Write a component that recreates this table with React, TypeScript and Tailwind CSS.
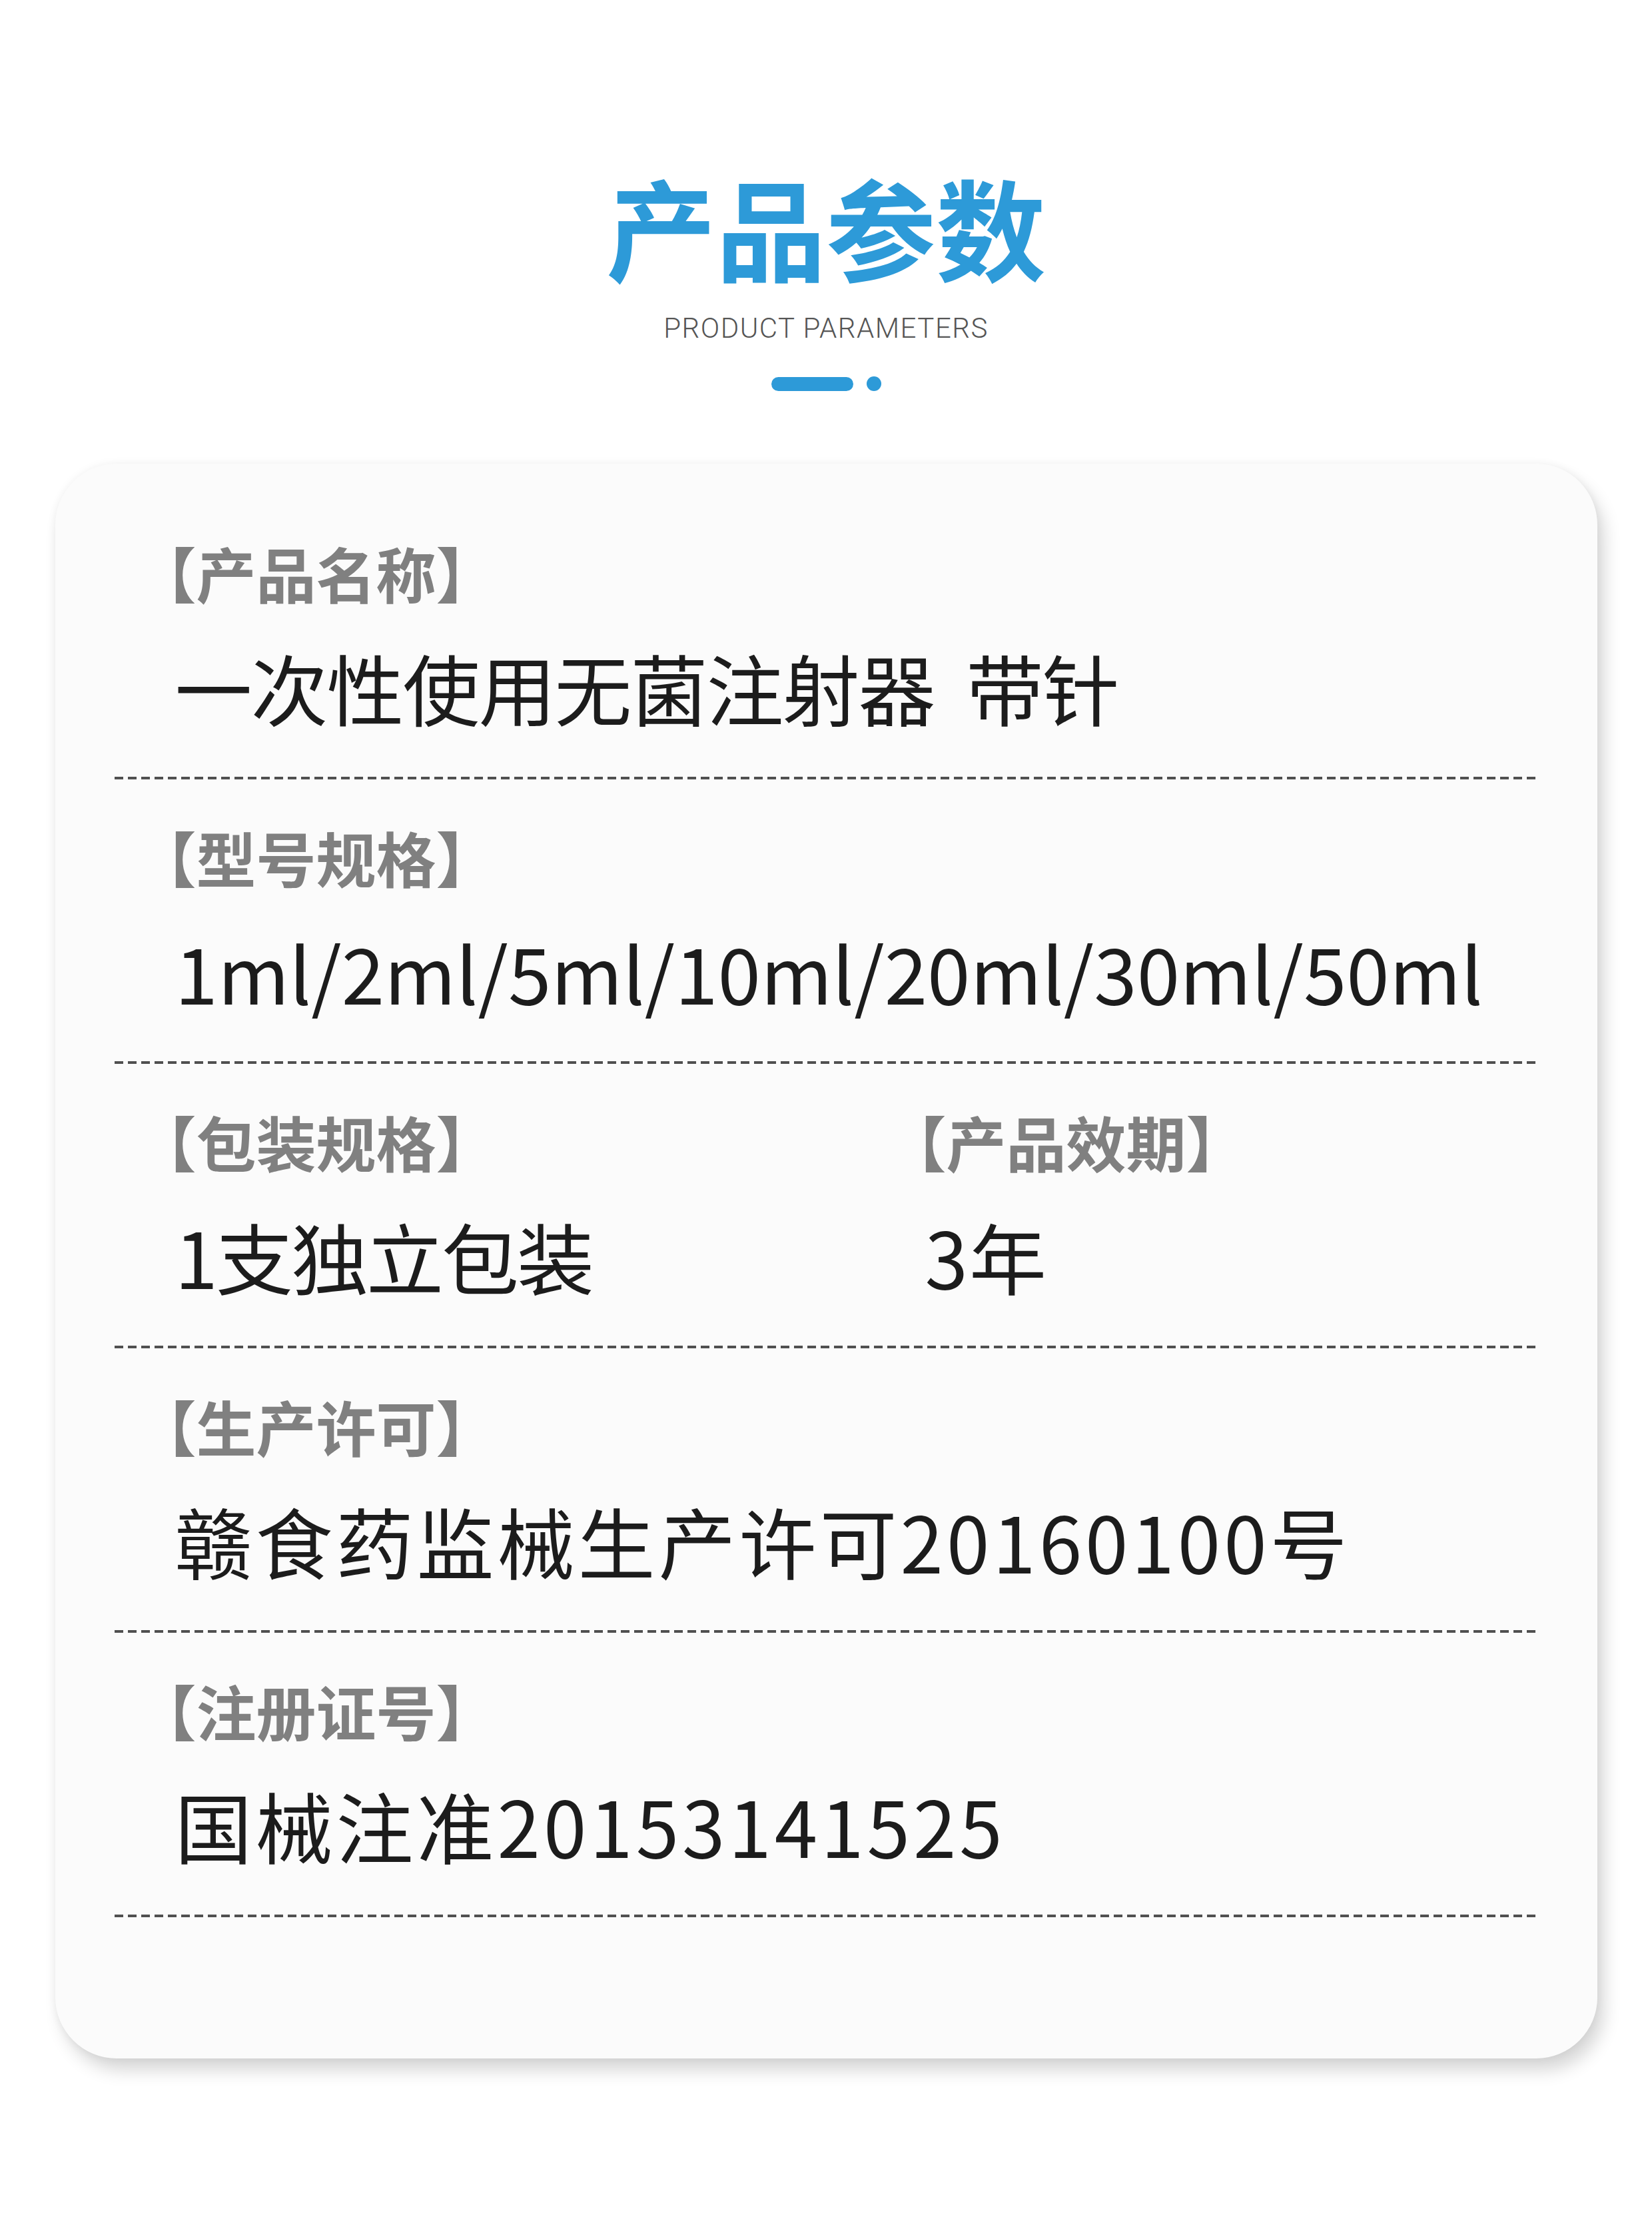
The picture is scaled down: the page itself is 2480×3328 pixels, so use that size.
import React from 'react';

const Dash: React.FC = () => (
  <div className="h-[4px] w-full bg-[repeating-linear-gradient(to_right,#505050_0,#505050_13px,transparent_13px,transparent_20px)]" />
);

const Label: React.FC<{ text: string }> = ({ text }) => (
  <p className="ml-[-52px] text-[90px] leading-[90px] font-bold text-[#808080]">{text}</p>
);

const Value: React.FC<{ text: string; track?: string }> = ({ text, track = '' }) => (
  <p className={`ml-[6px] mt-[68px] text-[116px] leading-[116px] text-[#1c1c1c] whitespace-pre ${track}`}>{text}</p>
);

const App: React.FC = () => {
  const rows = [
    { label: '【产品名称】', value: '一次性使用无菌注射器  带针', track: 'tracking-[-2px]' },
    { label: '【型号规格】', value: '1ml/2ml/5ml/10ml/20ml/30ml/50ml', track: '' },
    null,
    { label: '【生产许可】', value: '赣食药监械生产许可20160100号', track: 'tracking-[5px]' },
    { label: '【注册证号】', value: '国械注准20153141525', track: 'tracking-[5px]' },
  ];

  return (
    <div className="w-[2480px] min-h-[3328px] bg-white font-['Noto_Sans_CJK_SC',sans-serif]">
      {/* Heading */}
      <div className="flex flex-col items-center pt-[256px]">
        <h1 className="text-[165px] leading-[165px] font-bold text-[#2d9ad8]">产品参数</h1>
        <p className="mt-[51px] font-['Roboto',sans-serif] text-[42px] leading-[42px] font-light tracking-[1.5px] text-[#555555]">
          PRODUCT PARAMETERS
        </p>
        <div className="mt-[51px] flex items-center gap-[20px]">
          <div className="h-[21px] w-[123px] rounded-full bg-[#2d9ad8]" />
          <div className="h-[22px] w-[22px] rounded-full bg-[#2d9ad8]" />
        </div>
      </div>

      {/* Card */}
      <div className="mx-auto mt-[109px] w-[2315px] rounded-[92px] bg-[#fbfbfb] px-[89px] pt-[118px] pb-[212px] shadow-[10px_18px_26px_rgba(0,0,0,0.16),0_0_14px_rgba(0,0,0,0.05)]">
        {rows.map((row, idx) => (
          <div key={idx} className={idx === 0 ? '' : 'pt-[71px]'}>
            {row ? (
              <div className="pl-[85px]">
                <Label text={row.label} />
                <Value text={row.value} track={row.track} />
              </div>
            ) : (
              <div className="grid grid-cols-[1126px_1fr] pl-[85px]">
                <div>
                  <Label text="【包装规格】" />
                  <Value text="1支独立包装" track="tracking-[-3px]" />
                </div>
                <div>
                  <Label text="【产品效期】" />
                  <Value text="3年" track="tracking-[2px]" />
                </div>
              </div>
            )}
            <div className="mt-[78px]">
              <Dash />
            </div>
          </div>
        ))}
      </div>
    </div>
  );
};

export default App;
